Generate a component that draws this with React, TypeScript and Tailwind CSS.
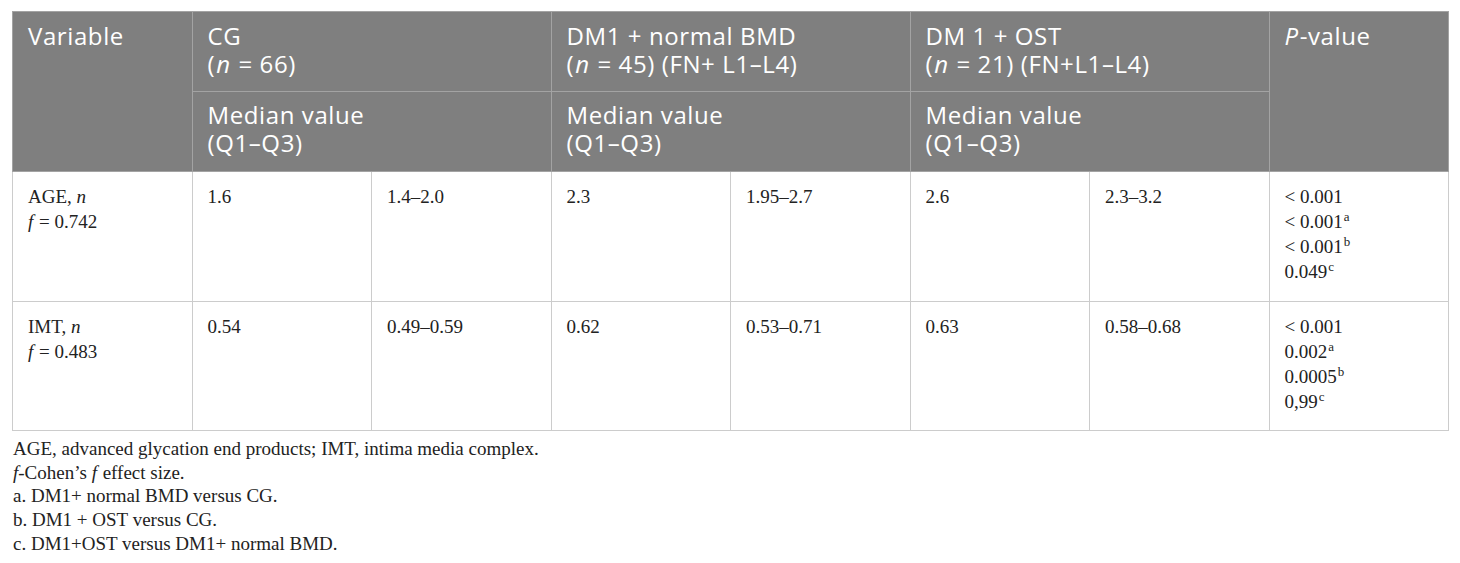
import React from "react";

const serif = { fontFamily: '"Liberation Serif", "Times New Roman", serif' };
const sans = { fontFamily: '"Open Sans", "Noto Sans", sans-serif' };

const th =
  "border border-[#a3a3a3] bg-[#7f7f7f] align-top text-left font-normal text-white text-[24px] leading-[28px] tracking-[0.6px] px-[15px]";
const td =
  "border border-[#cccccc] align-top text-left text-[19px] leading-[25px] text-[#222] px-[15px] pt-[12px]";

function Sup({ c }: { c: string }) {
  return <sup className="text-[13px] -top-[7px] ml-[1px]">{c}</sup>;
}

function N() {
  return <i className="ml-[1px] mr-[1px]">n</i>;
}

export default function App() {
  return (
    <div className="bg-white w-[1460px] h-[563px] overflow-hidden pl-[12px] pt-[11px]">
      <table className="table-fixed border-collapse w-[1437px] border border-[#c8c8c8]">
        <thead style={sans}>
          <tr className="h-[80px]">
            <th rowSpan={2} className={`${th} pt-[10px]`}>
              Variable
            </th>
            <th colSpan={2} className={`${th} pt-[10px]`}>
              CG
              <br />(<N /> = 66)
            </th>
            <th colSpan={2} className={`${th} pt-[10px]`}>
              DM1 + normal BMD
              <br />(<N /> = 45) (FN+ L1–L4)
            </th>
            <th colSpan={2} className={`${th} pt-[10px]`}>
              DM 1 + OST
              <br />(<N /> = 21) (FN+L1–L4)
            </th>
            <th rowSpan={2} className={`${th} pt-[10px]`}>
              <i className="mr-[1px]">P</i>-value
            </th>
          </tr>
          <tr className="h-[80px]">
            <th colSpan={2} className={`${th} pt-[9px]`}>
              Median value
              <br />
              (Q1–Q3)
            </th>
            <th colSpan={2} className={`${th} pt-[9px]`}>
              Median value
              <br />
              (Q1–Q3)
            </th>
            <th colSpan={2} className={`${th} pt-[9px]`}>
              Median value
              <br />
              (Q1–Q3)
            </th>
          </tr>
        </thead>
        <tbody style={serif}>
          <tr className="h-[130px]">
            <td className={td}>
              AGE, <i>n</i>
              <br />
              <i className="mr-[1px]">f</i> = 0.742
            </td>
            <td className={td}>1.6</td>
            <td className={td}>1.4–2.0</td>
            <td className={td}>2.3</td>
            <td className={td}>1.95–2.7</td>
            <td className={td}>2.6</td>
            <td className={td}>2.3–3.2</td>
            <td className={td}>
              &lt; 0.001
              <br />
              &lt; 0.001
              <Sup c="a" />
              <br />
              &lt; 0.001
              <Sup c="b" />
              <br />
              0.049
              <Sup c="c" />
            </td>
          </tr>
          <tr className="h-[129px]">
            <td className={td}>
              IMT, <i>n</i>
              <br />
              <i className="mr-[1px]">f</i> = 0.483
            </td>
            <td className={td}>0.54</td>
            <td className={td}>0.49–0.59</td>
            <td className={td}>0.62</td>
            <td className={td}>0.53–0.71</td>
            <td className={td}>0.63</td>
            <td className={td}>0.58–0.68</td>
            <td className={td}>
              &lt; 0.001
              <br />
              0.002
              <Sup c="a" />
              <br />
              0.0005
              <Sup c="b" />
              <br />
              0,99
              <Sup c="c" />
            </td>
          </tr>
        </tbody>
      </table>
      <div
        style={serif}
        className="mt-[6px] pl-[1px] text-[19px] leading-[23.7px] text-[#222]"
      >
        <p>AGE, advanced glycation end products; IMT, intima media complex.</p>
        <p>
          <i>f</i>-Cohen’s <i className="mr-[1px]">f</i> effect size.
        </p>
        <p>a. DM1+ normal BMD versus CG.</p>
        <p>b. DM1 + OST versus CG.</p>
        <p>c. DM1+OST versus DM1+ normal BMD.</p>
      </div>
    </div>
  );
}
